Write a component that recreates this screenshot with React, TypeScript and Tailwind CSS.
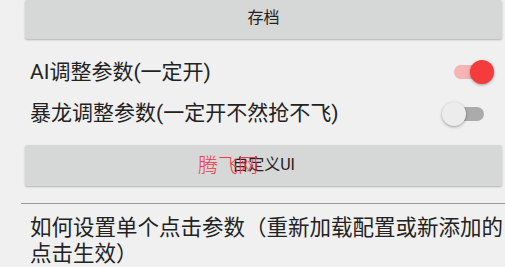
import React, { useState } from "react";

const font = { fontFamily: "Roboto, 'Noto Sans CJK SC', sans-serif" };

function Toggle({ on, onChange }: { on: boolean; onChange: () => void }) {
  return (
    <button
      type="button"
      onClick={onChange}
      className="relative w-[48px] h-[26px] flex items-center justify-center"
      aria-pressed={on}
    >
      <span
        className={
          on
            ? "block w-[34px] h-[14px] rounded-full bg-[#f6b3b3]"
            : "block w-[34px] h-[14px] rounded-full bg-[#ababab]"
        }
      />
      <span
        className={
          on
            ? "absolute top-[1px] left-[23px] w-[24px] h-[24px] rounded-full bg-[#f43c3c] shadow-[0_1px_3px_rgba(0,0,0,0.35)]"
            : "absolute top-[1px] left-[-1px] w-[24px] h-[24px] rounded-full bg-[#ececec] shadow-[0_1px_3px_rgba(0,0,0,0.35)]"
        }
      />
    </button>
  );
}

function GrayButton({ children, className }: { children: React.ReactNode; className?: string }) {
  return (
    <button
      type="button"
      className={
        "relative w-[477px] ml-[25px] bg-[#d6d7d7] rounded-[2px] shadow-[0_1px_2px_rgba(0,0,0,0.25)] text-[16px] text-[#222] flex items-center justify-center " +
        (className ?? "")
      }
    >
      {children}
    </button>
  );
}

export default function App() {
  const [ai, setAi] = useState(true);
  const [dragon, setDragon] = useState(false);

  return (
    <div className="w-[505px] h-[267px] overflow-hidden bg-[#f0f0f0] flex flex-col" style={font}>
      <GrayButton className="h-[39px] pb-[2px]">存档</GrayButton>

      <div className="mt-[13px] h-[42px] pl-[30px] pr-[10px] flex items-center justify-between">
        <span className="text-[21px] text-[#222]">AI调整参数(一定开)</span>
        <Toggle on={ai} onChange={() => setAi(!ai)} />
      </div>
      <div className="h-[42px] pl-[30px] pr-[14px] flex items-center justify-between">
        <span className="text-[21px] text-[#222]">暴龙调整参数(一定开不然抢不飞)</span>
        <Toggle on={dragon} onChange={() => setDragon(!dragon)} />
      </div>

      <GrayButton className="mt-[10px] h-[42px]">
        <span className="pb-[1px]">自定义UI</span>
        <span className="absolute left-[173px] top-[11px] text-[20px] font-light text-[#f0394a] leading-none">
          腾飞网
        </span>
      </GrayButton>

      <div className="mt-[17px] ml-[21px] h-px bg-[#9a9a9a]" />

      <p className="mt-[11px] pl-[30px] text-[21.5px] leading-[26px] text-[#222]">
        如何设置单个点击参数（重新加载配置或新添加的点击生效）
      </p>
    </div>
  );
}
